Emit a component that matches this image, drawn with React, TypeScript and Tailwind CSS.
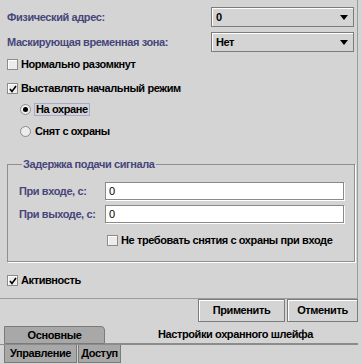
import React from "react"

const LABEL = "text-[#46467a]"

const Check = ({ checked }: { checked?: boolean }) => (
  <span className="relative w-[11px] h-[11px] shrink-0 border border-[#8c8c8c] bg-[#ececec] shadow-[inset_1px_1px_0_#ffffff]">
    {checked && (
      <svg className="absolute left-[1px] top-[1px]" width="8" height="8" viewBox="0 0 8 8">
        <path d="M1 4 L3 6.5 L7 1" stroke="#000" strokeWidth="1.6" fill="none" />
      </svg>
    )}
  </span>
)

const Radio = ({ checked }: { checked?: boolean }) => (
  <span className="w-[11px] h-[11px] shrink-0 rounded-full border border-[#8c8c8c] bg-[#ececec] flex items-center justify-center">
    {checked && <span className="w-[5px] h-[5px] rounded-full bg-black" />}
  </span>
)

const Combo = ({ value }: { value: string }) => (
  <div className="w-[143px] h-[20px] border border-[#7c7c7c] shadow-[inset_1px_1px_0_#ffffff] flex items-center pl-[4px] pr-[5px]">
    <span className="flex-1">{value}</span>
    <svg width="8" height="5" viewBox="0 0 8 5">
      <path d="M0 0 H8 L4 5 Z" fill="#000" />
    </svg>
  </div>
)

const Field = () => (
  <div className="flex-1 h-[18px] bg-white border border-[#8a8a8a] shadow-[1px_1px_0_#ffffff] flex items-center pl-[3px] font-normal">
    0
  </div>
)

const Button = ({ children, w }: { children: React.ReactNode; w: string }) => (
  <div className={`${w} h-[23px] border border-[#7c7c7c] shadow-[inset_1px_1px_0_#ffffff] flex items-center justify-center`}>
    {children}
  </div>
)

export default function App() {
  return (
    <div className="w-[362px] h-[364px] bg-[#d4d4d4] text-black text-[11px] tracking-[-0.4px] font-bold leading-[13px] whitespace-nowrap font-['Liberation_Sans',Arial,sans-serif] overflow-hidden">
      <div className="w-[358px] h-[299px] border-r border-b border-[#9c9c9c] flex flex-col pt-[7px]">
        <div className="h-[20px] flex items-center pl-[7px] pr-[3px]">
          <span className={LABEL}>Физический адрес:</span>
          <div className="ml-auto">
            <Combo value="0" />
          </div>
        </div>
        <div className="h-[20px] mt-[5px] flex items-center pl-[7px] pr-[3px]">
          <span className={LABEL}>Маскирующая временная зона:</span>
          <div className="ml-auto">
            <Combo value="Нет" />
          </div>
        </div>

        <div className="h-[20px] mt-[2px] flex items-center gap-[3px] pl-[7px]">
          <Check />
          <span>Нормально разомкнут</span>
        </div>
        <div className="h-[20px] mt-[4px] flex items-center gap-[3px] pl-[7px]">
          <Check checked />
          <span>Выставлять начальный режим</span>
        </div>
        <div className="h-[20px] mt-[1px] flex items-center gap-[3px] pl-[20px]">
          <Radio checked />
          <span className="border border-[#a8a8d0] px-[1px] leading-[11px]">На охране</span>
        </div>
        <div className="h-[20px] mt-[2px] flex items-center gap-[4px] pl-[20px]">
          <Radio />
          <span>Снят с охраны</span>
        </div>

        <fieldset className="ml-[7px] mt-[17px] w-[348px] border border-[#8f8f8f] shadow-[1px_1px_0_#ffffff] pl-[11px] pr-[10px] pb-[14px]">
          <legend className={`${LABEL} ml-[3px] px-[1px] font-bold`}>Задержка подачи сигнала</legend>
          <div className="mt-[11px] h-[18px] flex items-center">
            <span className={`${LABEL} w-[86px]`}>При входе, с:</span>
            <Field />
          </div>
          <div className="mt-[5px] h-[18px] flex items-center">
            <span className={`${LABEL} w-[86px]`}>При выходе, с:</span>
            <Field />
          </div>
          <div className="mt-[10px] h-[14px] flex items-center gap-[3px] pl-[88px]">
            <Check />
            <span>Не требовать снятия с охраны при входе</span>
          </div>
        </fieldset>

        <div className="mt-[11px] h-[14px] flex items-center gap-[3px] pl-[7px]">
          <Check checked />
          <span>Активность</span>
        </div>
      </div>

      <div className="w-[358px] flex justify-end gap-[2px]">
        <Button w="w-[87px]">Применить</Button>
        <Button w="w-[71px]">Отменить</Button>
      </div>

      <div className="w-[358px] mt-[4px] flex flex-col">
        <div className="h-[18px] flex">
          <div className="ml-[4px] w-[101px] bg-[#a8a8a8] border border-[#7a7a7a] rounded-tr-[4px] flex items-center justify-center">
            Основные
          </div>
          <div className="flex-1 border-b border-[#8c8c8c] flex items-center justify-center pl-[8px]">
            Настройки охранного шлейфа
          </div>
        </div>
        <div className="h-[19px] flex border-t border-[#8c8c8c]">
          <div className="ml-[4px] w-[73px] bg-[#a8a8a8] border-x border-b border-[#7a7a7a] flex items-center justify-center">
            Управление
          </div>
          <div className="ml-[1px] w-[43px] bg-[#a8a8a8] border-x border-b border-[#7a7a7a] flex items-center justify-center">
            Доступ
          </div>
        </div>
      </div>
    </div>
  )
}
